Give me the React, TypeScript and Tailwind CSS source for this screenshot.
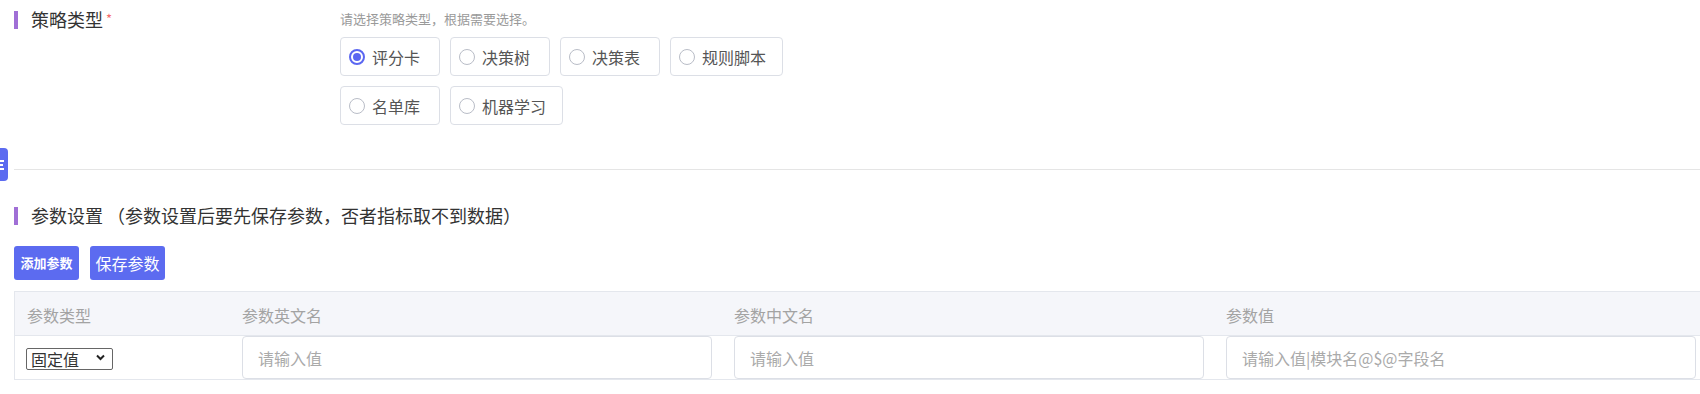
import { useState } from "react";

const STRATEGY_TYPES = ["评分卡", "决策树", "决策表", "规则脚本", "名单库", "机器学习"];

const COLUMNS = ["参数类型", "参数英文名", "参数中文名", "参数值"];

function SectionTitle({ children }: { children: React.ReactNode }) {
  return (
    <div className="flex items-start">
      <span className="mt-[1px] h-[18px] w-[4px] bg-[#a06fd6]" />
      <span className="ml-[13px] text-[18px] leading-[19px] text-[#333]">{children}</span>
    </div>
  );
}

export default function App() {
  const [strategy, setStrategy] = useState("评分卡");

  return (
    <div className="relative h-[394px] w-[1700px] overflow-hidden bg-white font-['Noto_Sans_CJK_SC','Microsoft_YaHei',sans-serif] text-[#333]">
      {/* side tab */}
      <div className="absolute left-0 top-[148px] flex h-[33px] w-[8px] flex-col justify-center gap-[2px] rounded-r-[4px] bg-[#5c6bf0]">
        <span className="h-[2px] w-[4px] bg-white" />
        <span className="h-[2px] w-[3px] bg-white" />
        <span className="h-[2px] w-[4px] bg-white" />
      </div>

      {/* Strategy type */}
      <div className="flex h-[169px]">
        <div className="w-[340px] pl-[14px] pt-[10px]">
          <div className="flex items-start">
            <SectionTitle>策略类型</SectionTitle>
            <span className="ml-[3px] mt-[2px] text-[13px] leading-[13px] text-[#f56c6c]">*</span>
          </div>
        </div>
        <div className="pt-[10px]">
          <p className="text-[13px] leading-[18px] text-[#9a9a9a]">请选择策略类型，根据需要选择。</p>
          <div className="mt-[9px] flex w-[450px] flex-wrap gap-[10px]">
            {STRATEGY_TYPES.map((item) => {
              const active = item === strategy;
              return (
                <label
                  key={item}
                  onClick={() => setStrategy(item)}
                  className="flex h-[39px] min-w-[100px] cursor-pointer items-center rounded-[4px] border border-[#dcdfe6] pl-[8px] pr-[16px]"
                >
                  {active ? (
                    <span className="flex h-[16px] w-[16px] items-center justify-center rounded-full border-2 border-[#5b67f1]">
                      <span className="h-[8px] w-[8px] rounded-full bg-[#5b67f1]" />
                    </span>
                  ) : (
                    <span className="h-[16px] w-[16px] rounded-full border-[1.5px] border-[#b9bdc7]" />
                  )}
                  <span className="ml-[7px] text-[16px] leading-[20px] text-[#555]">{item}</span>
                </label>
              );
            })}
          </div>
        </div>
      </div>

      <div className="ml-[14px] border-t border-[#e5e5e5]" />

      {/* Parameter settings */}
      <div className="pl-[14px] pt-[36px]">
        <SectionTitle>参数设置 （参数设置后要先保存参数，否者指标取不到数据）</SectionTitle>

        <div className="mt-[21px] flex">
          <button className="h-[34px] w-[65px] rounded-[3px] bg-[#5c6bf0] text-[13px] font-bold text-white">
            添加参数
          </button>
          <button className="ml-[11px] h-[34px] w-[75px] rounded-[3px] bg-[#5c6bf0] text-[16px] text-white">
            保存参数
          </button>
        </div>

        <div className="mt-[11px] w-[1694px] border-l border-t border-[#e4e7ed]">
          <div className="grid h-[44px] grid-cols-[215px_492px_492px_492px] border-b border-[#e4e7ed] bg-[#f5f6fa]">
            {COLUMNS.map((col) => (
              <div key={col} className="flex items-center pl-[12px] pt-[2px] text-[16px] text-[#a3a3a3]">
                {col}
              </div>
            ))}
          </div>
          <div className="grid h-[44px] grid-cols-[215px_492px_492px_492px] border-b border-[#e4e7ed]">
            <div className="flex items-center pl-[11px]">
              <div className="relative h-[22px] w-[87px]">
                <select className="h-full w-full appearance-none rounded-[2px] border border-[#666] py-0 pl-[4px] text-[16px] leading-[20px] text-[#333]">
                  <option>固定值</option>
                  <option>变量</option>
                </select>
                <svg
                  className="pointer-events-none absolute right-[8px] top-[7px]"
                  width="9"
                  height="7"
                  viewBox="0 0 9 7"
                  fill="none"
                >
                  <path d="M1 1.5 L4.5 5 L8 1.5" stroke="#222" strokeWidth="2" />
                </svg>
              </div>
            </div>
            {["请输入值", "请输入值", "请输入值|模块名@$@字段名"].map((ph, i) => (
              <div key={i} className="pl-[12px] pr-[10px]">
                <input
                  placeholder={ph}
                  className="h-[43px] w-full rounded-[4px] border border-[#dcdfe6] px-[15px] text-[16px] text-[#333] outline-none placeholder:text-[#aaa]"
                />
              </div>
            ))}
          </div>
        </div>
      </div>
    </div>
  );
}
